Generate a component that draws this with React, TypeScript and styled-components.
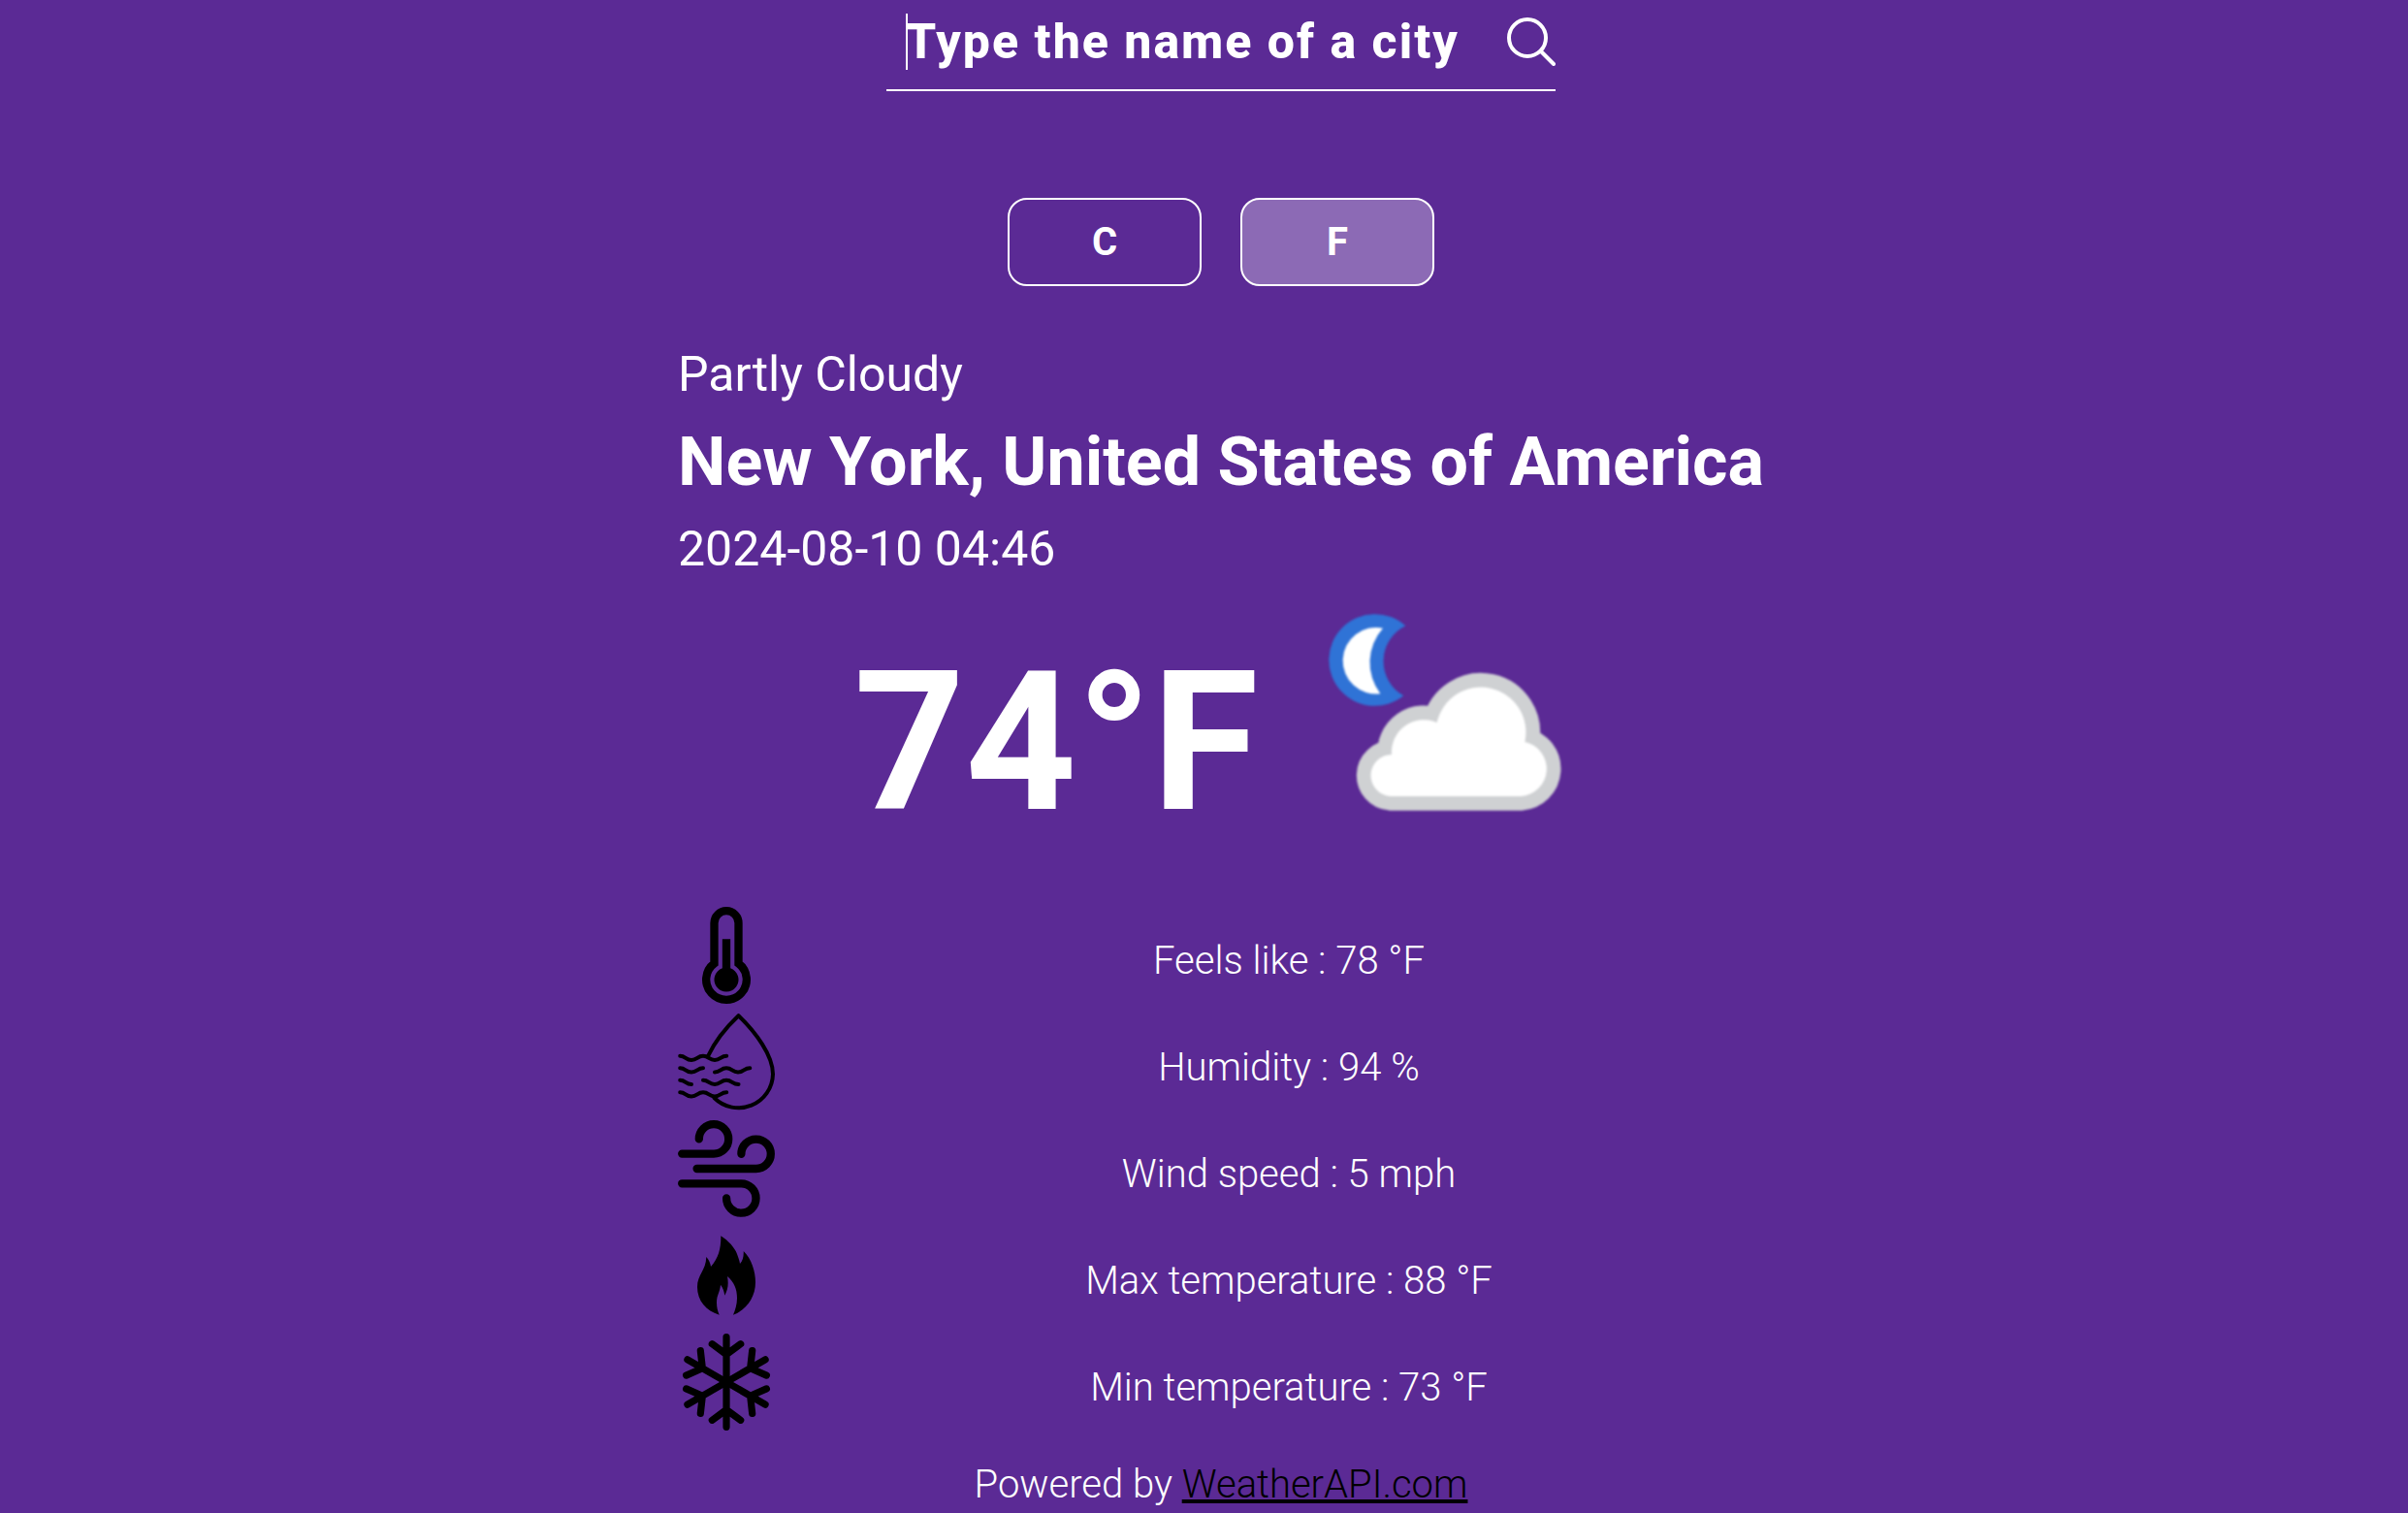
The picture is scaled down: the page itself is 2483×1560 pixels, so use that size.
import React, { useState } from "react";
import styled, { createGlobalStyle } from "styled-components";

const GlobalStyle = createGlobalStyle`
  *, *::before, *::after { box-sizing: border-box; }
  body {
    margin: 0;
    background: #5b2a95;
    color: #fff;
    font-family: Roboto, "Liberation Sans", sans-serif;
  }
`;

const Page = styled.main`
  display: flex;
  flex-direction: column;
  align-items: center;
  padding-left: 35px;
`;

const SearchForm = styled.form`
  display: flex;
  align-items: center;
  width: 690px;
  max-width: 100%;
  padding: 14px 0 20px 20px;
  border-bottom: 2px solid #fff;
`;

const SearchInput = styled.input`
  flex: 1;
  min-width: 0;
  height: 58px;
  padding: 0;
  border: 0;
  box-shadow: inset 2px 0 #fff;
  outline: 0;
  background: transparent;
  color: #fff;
  caret-color: #fff;
  font: 800 50px/58px Roboto, "Liberation Sans", sans-serif;
  letter-spacing: 2px;

  &::placeholder {
    color: #fff;
    opacity: 1;
  }
`;

const SearchButton = styled.button`
  display: flex;
  padding: 0;
  border: 0;
  background: transparent;
  color: #fff;
  cursor: pointer;
`;

const Units = styled.div`
  display: flex;
  gap: 40px;
  margin-top: 110px;
`;

const UnitButton = styled.button<{ $active: boolean }>`
  width: 200px;
  height: 91px;
  padding: 0;
  border: 2px solid #fff;
  border-radius: 20px;
  background: ${(p) => (p.$active ? "rgba(255, 255, 255, 0.3)" : "transparent")};
  color: #fff;
  font: 700 40px/47px Roboto, "Liberation Sans", sans-serif;
  cursor: pointer;
`;

const Weather = styled.section`
  display: flex;
  flex-direction: column;
  margin-top: 61px;
`;

const Line = styled.p`
  margin: 0;
  font-size: 50px;
  line-height: 60px;
`;

const City = styled.h1`
  margin: 0;
  font-size: 70px;
  font-weight: 700;
  line-height: 120px;
`;

const Current = styled.div`
  display: flex;
  align-items: center;
  justify-content: center;
  gap: 40px;
  margin-top: 20px;
`;

const Temperature = styled.span`
  font-size: 200px;
  font-weight: 700;
  line-height: 234px;
`;

const Details = styled.ul`
  margin: 19px 0 0;
  padding: 0;
  list-style: none;
`;

const Detail = styled.li`
  display: flex;
  gap: 40px;
  height: 110px;
`;

const DetailText = styled.span`
  flex: 1;
  text-align: center;
  font-size: 40px;
  font-weight: 300;
  line-height: 112px;
`;

const Footer = styled.footer`
  margin-top: 20px;
  font-size: 40px;
  font-weight: 300;
  line-height: 52px;

  a {
    color: #000;
    text-decoration-thickness: 4px;
  }
`;

const SearchIcon = () => (
  <svg width="50" height="50" viewBox="0 0 50 50" fill="none" stroke="currentColor" strokeWidth="4" strokeLinecap="round" aria-hidden="true">
    <circle cx="21" cy="21" r="19" />
    <path d="M35 35L48 48" />
  </svg>
);

const CloudImage = styled.svg`
  filter: blur(1px);
`;

const PartlyCloudyNight = () => (
  <CloudImage width="300" height="300" viewBox="-6 18 900 900" role="img" aria-label="Partly cloudy night">
    <path fill="#2f73d6" d="M328 106A142 142 0 1 0 322 322A122 122 0 0 1 328 106Z" />
    <path fill="#fff" d="M258 113A103 103 0 1 0 250 316A160 160 0 0 1 258 113Z" />
    <path
      fill="#fff"
      stroke="#cfd1d3"
      strokeWidth="88"
      paintOrder="stroke"
      d="M280 633A64.6 64.6 0 0 1 285 504A100 100 0 0 1 425 405A139 139 0 1 1 697 465A85 85 0 0 1 685 633Z"
    />
  </CloudImage>
);

const Glyph = ({ children, size = 100 }: { children: React.ReactNode; size?: number }) => (
  <svg width="100" height="100" viewBox={`0 0 ${size} ${size}`} aria-hidden="true">
    {children}
  </svg>
);

const ThermometerIcon = () => (
  <Glyph size={12}>
    <path fill="none" stroke="#000" d="M4.5 7V2a1.5 1.5 0 0 1 3 0v5a2.5 2.5 0 1 1-3 0z" />
    <path d="M5.5 4h1v3.6a1.5 1.5 0 1 1-1 0z" />
  </Glyph>
);

const HumidityIcon = () => (
  <Glyph>
    <g fill="none" stroke="#000" strokeWidth="4" strokeLinecap="round" strokeLinejoin="round">
      <path d="M31 44C38 29 50 14 62.5 2.2C80 19 98 43 98 62.5A35.5 35.5 0 0 1 37.5 87" />
      <path d="M2.2 43.8C8 43.8 8 48 14 48S20 43.8 26 43.8S32 48 38 48S44 43.8 50.2 43.8" />
      <path d="M2.2 56.3C8 56.3 8 60.5 14 60.5S20 56.3 26 56.3" />
      <path d="M38 60.5C44 60.5 44 56.3 50 56.3S56 60.5 62 60.5S68 56.3 74.3 56.3" />
      <path d="M2.2 68.8C8 68.8 8 73 14 73" />
      <path d="M26 68.8C32 68.8 32 73 38 73S44 68.8 50 68.8S56 73 62.5 73" />
      <path d="M2.2 81.3C8 81.3 8 85.5 14 85.5S20 81.3 26 81.3S32 85.5 38 85.5S44 81.3 50.2 81.3" />
    </g>
  </Glyph>
);

const WindIcon = () => (
  <Glyph>
    <g fill="none" stroke="#000" strokeWidth="8.3" strokeLinecap="round">
      <path d="M4.2 34.6H37A15.2 15.2 0 1 0 21.8 19.4" />
      <path d="M19.6 50H80.6A15.2 15.2 0 1 0 65.4 34.8" />
      <path d="M4.2 65.3H65.3A15.2 15.2 0 1 1 50.1 80.5" />
    </g>
  </Glyph>
);

const FireIcon = () => (
  <Glyph>
    <path d="M44.3 9.3C52 14 59 22 61 28C62 31 63.5 34 64 38C67 35 68 30 67.7 25C76 33 80 46 80 57C80 73 70 86 57 90.7C59 86 61 80 61 73.5C61 64 58 57 51 51C52.5 59 51.5 65 48.3 70.7C47.5 66 46.5 63 44 59.7C43.5 67 40 70 40 78C40 83 41 87 42.7 90.7C29 86.5 20 76 20 62C20 49 29 45 29.3 31C32 34 33.5 37 34 41C42 32 44.5 22 44.3 9.3Z" />
  </Glyph>
);

const SnowflakeIcon = () => (
  <Glyph>
    <g fill="none" stroke="#000" strokeWidth="7.2" strokeLinecap="round" strokeLinejoin="round">
      {[0, 60, 120, 180, 240, 300].map((angle) => (
        <path key={angle} transform={`rotate(${angle} 50 50)`} d="M50 50V3.7M35.3 10.7L50 21.5L64.7 10.7" />
      ))}
    </g>
  </Glyph>
);

type Unit = "C" | "F";

const readings = {
  F: { now: 74, feels: 78, wind: "5 mph", max: 88, min: 73 },
  C: { now: 23, feels: 26, wind: "8 kph", max: 31, min: 23 },
};

export default function App() {
  const [unit, setUnit] = useState<Unit>("F");
  const [city, setCity] = useState("");
  const data = readings[unit];
  const details = [
    { Icon: ThermometerIcon, text: `Feels like : ${data.feels} °${unit}` },
    { Icon: HumidityIcon, text: "Humidity : 94 %" },
    { Icon: WindIcon, text: `Wind speed : ${data.wind}` },
    { Icon: FireIcon, text: `Max temperature : ${data.max} °${unit}` },
    { Icon: SnowflakeIcon, text: `Min temperature : ${data.min} °${unit}` },
  ];

  return (
    <>
      <GlobalStyle />
      <Page>
        <SearchForm onSubmit={(e) => e.preventDefault()}>
          <SearchInput
            type="text"
            aria-label="City"
            placeholder="Type the name of a city"
            value={city}
            onChange={(e) => setCity(e.target.value)}
          />
          <SearchButton type="submit" aria-label="Search">
            <SearchIcon />
          </SearchButton>
        </SearchForm>

        <Units>
          {(["C", "F"] as Unit[]).map((u) => (
            <UnitButton key={u} type="button" $active={u === unit} aria-pressed={u === unit} onClick={() => setUnit(u)}>
              {u}
            </UnitButton>
          ))}
        </Units>

        <Weather>
          <Line>Partly Cloudy</Line>
          <City>New York, United States of America</City>
          <Line>2024-08-10 04:46</Line>
          <Current>
            <Temperature>{data.now}°{unit}</Temperature>
            <PartlyCloudyNight />
          </Current>
          <Details>
            {details.map(({ Icon, text }) => (
              <Detail key={text}>
                <Icon />
                <DetailText>{text}</DetailText>
              </Detail>
            ))}
          </Details>
        </Weather>

        <Footer>
          Powered by <a href="https://www.weatherapi.com/">WeatherAPI.com</a>
        </Footer>
      </Page>
    </>
  );
}
